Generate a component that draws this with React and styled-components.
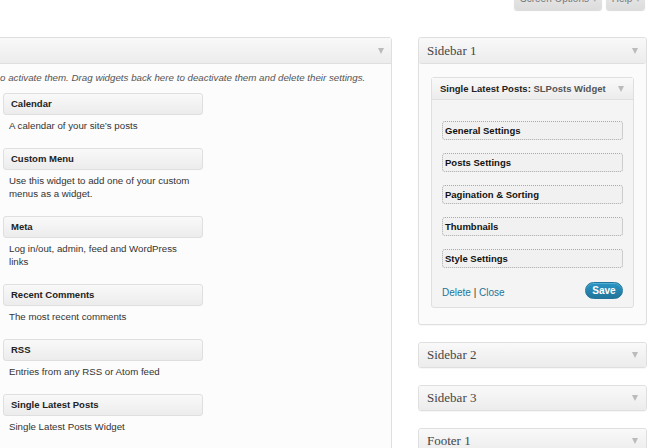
import React from "react";
import styled, { createGlobalStyle } from "styled-components";

const GlobalStyle = createGlobalStyle`
  html, body {
    margin: 0;
    padding: 0;
    background: #fff;
    overflow: hidden;
  }
  body {
    width: 647px;
    height: 448px;
    font-family: "Liberation Sans", Arial, sans-serif;
    color: #333;
  }
`;

const available = [
  { title: "Calendar", desc: "A calendar of your site\u2019s posts" },
  { title: "Custom Menu", desc: "Use this widget to add one of your custom menus as a widget." },
  { title: "Meta", desc: "Log in/out, admin, feed and WordPress links" },
  { title: "Recent Comments", desc: "The most recent comments" },
  { title: "RSS", desc: "Entries from any RSS or Atom feed" },
  { title: "Single Latest Posts", desc: "Single Latest Posts Widget" },
];

const sections = [
  "General Settings",
  "Posts Settings",
  "Pagination & Sorting",
  "Thumbnails",
  "Style Settings",
];

function App() {
  return (
    <Page>
      <GlobalStyle />
      <TopBar>
        <TabButton>Screen Options <small>▼</small></TabButton>
        <TabButton>Help <small>▼</small></TabButton>
      </TopBar>
      <Columns>
        <LeftPanel>
          <PanelHeader>
            <Arrow />
          </PanelHeader>
          <Intro>
            o activate them. Drag widgets back here to deactivate them and delete their settings.
          </Intro>
          <WidgetList>
            {available.map((w) => (
              <li key={w.title}>
                <WidgetTitle>{w.title}</WidgetTitle>
                <WidgetDesc>{w.desc}</WidgetDesc>
              </li>
            ))}
          </WidgetList>
        </LeftPanel>

        <RightColumn>
          <SidebarPanel>
            <SidebarHeader>
              Sidebar 1
              <Arrow />
            </SidebarHeader>
            <SidebarBody>
              <Widget>
                <WidgetHeader>
                  <span>
                    Single Latest Posts: <em>SLPosts Widget</em>
                  </span>
                  <Arrow />
                </WidgetHeader>
                <WidgetInside>
                  {sections.map((s) => (
                    <SettingsBox key={s}>{s}</SettingsBox>
                  ))}
                  <Actions>
                    <Links>
                      <a href="#">Delete</a> | <a href="#">Close</a>
                    </Links>
                    <SaveButton>Save</SaveButton>
                  </Actions>
                </WidgetInside>
              </Widget>
            </SidebarBody>
          </SidebarPanel>
          <SidebarPanel>
            <SidebarHeader closed>
              Sidebar 2
              <Arrow />
            </SidebarHeader>
          </SidebarPanel>
          <SidebarPanel>
            <SidebarHeader closed>
              Sidebar 3
              <Arrow />
            </SidebarHeader>
          </SidebarPanel>
          <SidebarPanel>
            <SidebarHeader closed>
              Footer 1
              <Arrow />
            </SidebarHeader>
          </SidebarPanel>
        </RightColumn>
      </Columns>
    </Page>
  );
}
export default App;

const Page = styled.div`
  width: 647px;
  height: 448px;
  overflow: hidden;
`;

const TopBar = styled.div`
  display: flex;
  justify-content: flex-end;
  gap: 4px;
  padding-right: 2px;
  margin-top: -13px;
  height: 23px;
`;

const TabButton = styled.div`
  height: 23px;
  line-height: 23px;
  padding: 0 4px 0 6px;
  font-size: 10px;
  color: #777;
  background: linear-gradient(to bottom, #ececec, #dcdcdc);
  border-radius: 0 0 3px 3px;
  box-shadow: 0 1px 1px rgba(0, 0, 0, 0.15);
  small {
    font-size: 6px;
    color: #aaa;
  }
`;

const Columns = styled.div`
  display: flex;
  align-items: flex-start;
  margin-top: 27px;
  gap: 26px;
`;

const LeftPanel = styled.div`
  flex: none;
  width: 410px;
  margin-left: -20px;
  min-height: 430px;
  background: #fcfcfc;
  border: 1px solid #dfdfdf;
  border-radius: 3px;
`;

const PanelHeader = styled.div`
  height: 25px;
  display: flex;
  align-items: center;
  justify-content: flex-end;
  padding-right: 7px;
  background: linear-gradient(to bottom, #f9f9f9, #ececec);
  border-bottom: 1px solid #dfdfdf;
`;

const Arrow = styled.i`
  display: block;
  width: 0;
  height: 0;
  border-left: 3.5px solid transparent;
  border-right: 3.5px solid transparent;
  border-top: 6px solid #bbb;
  margin-left: auto;
`;

const Intro = styled.p`
  margin: 7px 0 0 19px;
  font-size: 9.75px;
  line-height: 13px;
  font-style: italic;
  color: #555;
  white-space: nowrap;
`;

const WidgetList = styled.ul`
  list-style: none;
  margin: 9px 0 0;
  padding: 0 0 0 22px;
  li {
    width: 200px;
    margin-bottom: 16px;
  }
`;

const WidgetTitle = styled.div`
  height: 20px;
  line-height: 20px;
  padding: 0 7px;
  font-size: 9.5px;
  font-weight: bold;
  color: #222;
  background: linear-gradient(to bottom, #f9f9f9, #ececec);
  border: 1px solid #dfdfdf;
  border-radius: 3px;
`;

const WidgetDesc = styled.div`
  margin-top: 4px;
  padding: 0 6px;
  font-size: 9.7px;
  line-height: 13px;
  color: #333;
`;

const RightColumn = styled.div`
  flex: none;
  width: 229px;
  display: flex;
  flex-direction: column;
  gap: 17px;
`;

const SidebarPanel = styled.div`
  background: #fbfbfb;
  border: 1px solid #dfdfdf;
  border-radius: 3px;
  box-shadow: 0 1px 0 rgba(0, 0, 0, 0.03);
`;

const SidebarHeader = styled.div`
  height: ${(p) => (p.closed ? "24px" : "25px")};
  display: flex;
  align-items: center;
  padding: 0 8px 0 8px;
  font-family: "Liberation Serif", "Times New Roman", serif;
  font-size: 13px;
  color: #464646;
  background: linear-gradient(to bottom, #f9f9f9, #ececec);
  border-bottom: ${(p) => (p.closed ? "none" : "1px solid #dfdfdf")};
  border-radius: 3px;
`;

const SidebarBody = styled.div`
  padding: 13px 12px 16px 12px;
`;

const Widget = styled.div`
  background: #f4f4f4;
  border: 1px solid #dfdfdf;
  border-radius: 3px;
`;

const WidgetHeader = styled.div`
  height: 21px;
  display: flex;
  align-items: center;
  padding: 0 9px 0 8px;
  font-size: 9.5px;
  font-weight: bold;
  color: #222;
  background: linear-gradient(to bottom, #f9f9f9, #ececec);
  border-bottom: 1px solid #dfdfdf;
  em {
    font-style: normal;
    color: #555;
  }
`;

const WidgetInside = styled.div`
  display: flex;
  flex-direction: column;
  gap: 13px;
  padding: 21px 10px 8px 10px;
`;

const SettingsBox = styled.div`
  height: 17px;
  line-height: 17px;
  padding: 0 2px;
  font-size: 9.5px;
  font-weight: bold;
  color: #111;
  background: #f1f1f1;
  border: 1px dotted #aaa;
  border-radius: 3px;
`;

const Actions = styled.div`
  display: flex;
  align-items: center;
  justify-content: space-between;
  margin-top: 1px;
`;

const Links = styled.div`
  font-size: 10px;
  color: #333;
  padding-top: 4px;
  a {
    color: #21759b;
    text-decoration: none;
  }
`;

const SaveButton = styled.button`
  width: 38px;
  height: 17px;
  padding: 0;
  font-family: "Liberation Sans", Arial, sans-serif;
  font-size: 10px;
  font-weight: bold;
  color: #fff;
  background: linear-gradient(to bottom, #2a95c5, #21759b);
  border: 1px solid #21759b;
  border-radius: 9px;
  box-shadow: inset 0 1px 0 rgba(120, 200, 230, 0.5);
`;
